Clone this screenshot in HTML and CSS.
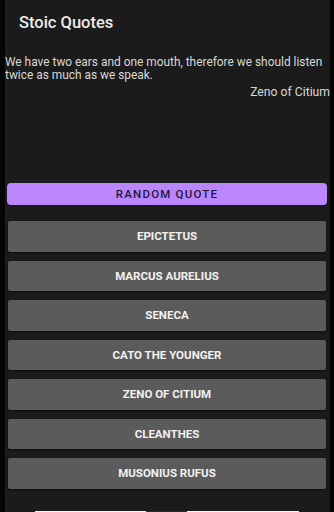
FILE: index.html
```html
<!DOCTYPE html>
<html>
<head>
    <meta charset="utf-8">
    <link rel="stylesheet" href="styles.css">
</head>
<body>
<div class="screen">
    <div class="toolbar">Stoic Quotes</div>

    <div class="quote">
        <p class="quote-text">We have two ears and one mouth, therefore we should listen twice as much as we speak.</p>
        <p class="quote-author">Zeno of Citium</p>
    </div>

    <button class="random">RANDOM QUOTE</button>

    <div class="authors">
        <button class="author">EPICTETUS</button>
        <button class="author">MARCUS AURELIUS</button>
        <button class="author">SENECA</button>
        <button class="author">CATO THE YOUNGER</button>
        <button class="author">ZENO OF CITIUM</button>
        <button class="author">CLEANTHES</button>
        <button class="author">MUSONIUS RUFUS</button>
    </div>

    <div class="peek">
        <span class="peek-left"></span>
        <span class="peek-mid"></span>
        <span class="peek-right"></span>
    </div>
</div>
</body>
</html>
```

FILE: styles.css
```css
/* тёмная тема, как в приложении */

html, body {
    margin: 0;
    padding: 0;
    background: #050505;
    font-family: Roboto, "Noto Sans", sans-serif;
}

.screen {
    margin: 0 4px 0 5px;
    height: 512px;
    background: #1b1b1b;
    overflow: hidden;
    display: flex;
    flex-direction: column;
}

.toolbar {
    padding: 13px 0 0 14px;
    height: 34px;
    box-sizing: border-box;
    font-size: 16.5px;
    font-weight: 500;
    color: #ececec;
}

.quote {
    padding: 24px 0 0 0;
    color: #d8d8d8;
    font-size: 11.9px;
    line-height: 13px;
}

.quote-text {
    margin: 0;
}

.quote-author {
    margin: 4px 0 0;
    text-align: right;
    font-size: 12.2px;
}

.random {
    margin: 84px 3px 0 2px;
    height: 22px;
    flex-shrink: 0;
    border: none;
    border-radius: 4px;
    background: #bb86fc;
    color: #22183a;
    font-family: Roboto, sans-serif;
    font-size: 11.5px;
    font-weight: 500;
    letter-spacing: 1.2px;
    padding: 0;
}

.authors {
    margin: 16px 4px 0 3px;
    display: flex;
    flex-direction: column;
    gap: 9px;
}

.author {
    height: 30.5px;
    flex-shrink: 0;
    border: none;
    border-radius: 2px;
    background: #5b5b5b;
    box-shadow: 0 1px 2px rgba(0, 0, 0, 0.6);
    color: #f2f2f2;
    font-family: Roboto, sans-serif;
    font-size: 11.5px;
    font-weight: 700;
    padding: 0;
}

.peek {
    margin-top: 22px;
    display: flex;
    padding-left: 30px;
    flex-shrink: 0;
}

.peek span {
    height: 6px;
    display: block;
}

.peek-left {
    width: 111px;
    background: #f4f4f4;
}

.peek-mid {
    width: 41px;
    background: #2a2a2a;
}

.peek-right {
    width: 112px;
    background: #f4f4f4;
}
```
